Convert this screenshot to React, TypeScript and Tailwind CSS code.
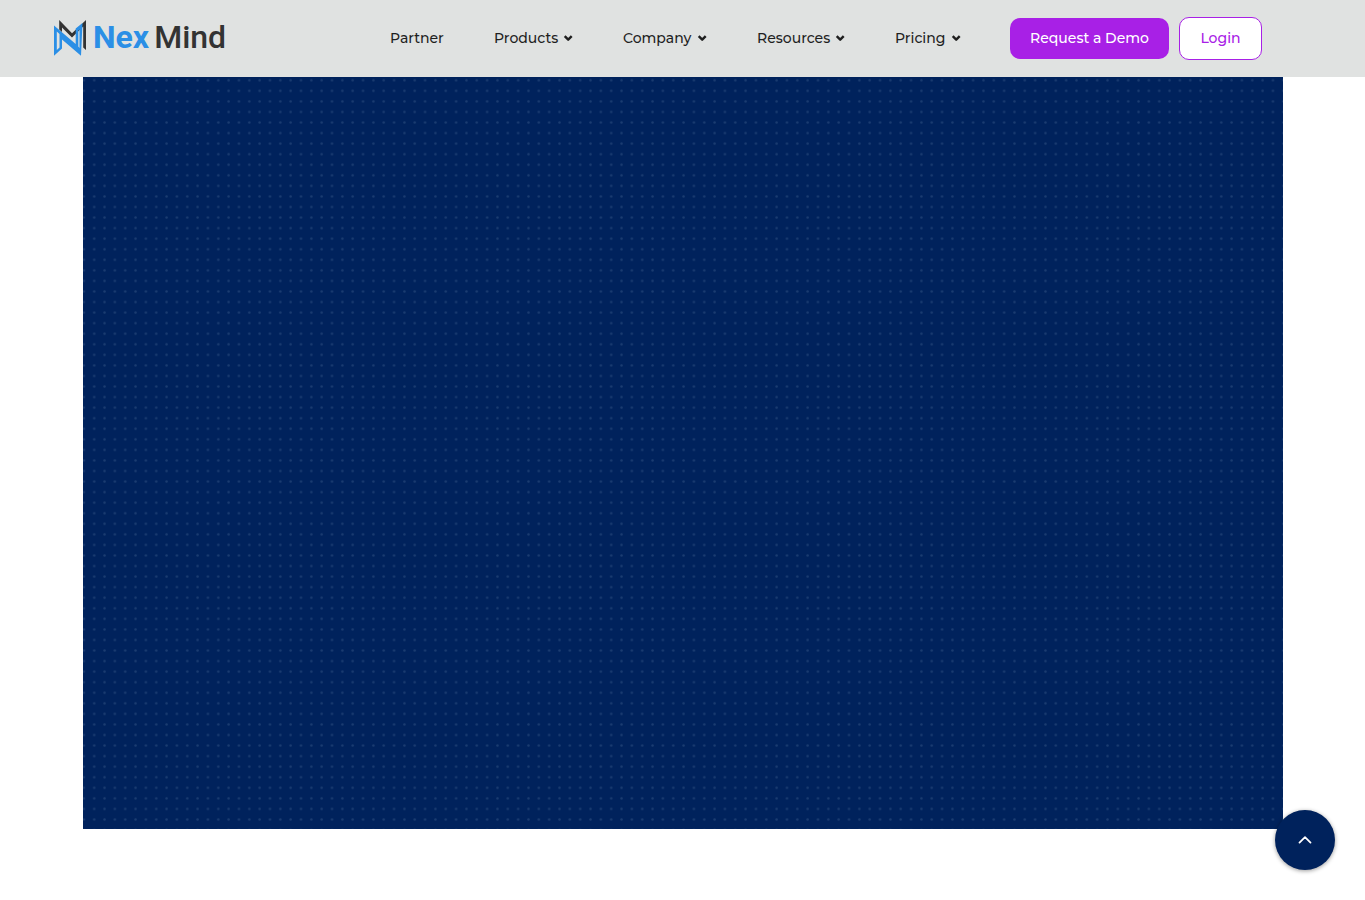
type NavItem = { label: string; width: string; menu: boolean };

const navItems: NavItem[] = [
  { label: 'Partner', width: 'w-[54px]', menu: false },
  { label: 'Products', width: 'w-[79px]', menu: true },
  { label: 'Company', width: 'w-[84px]', menu: true },
  { label: 'Resources', width: 'w-[88px]', menu: true },
  { label: 'Pricing', width: 'w-[66px]', menu: true },
];

function LogoMark() {
  return (
    <svg viewBox="0 0 32 36" className="h-9 w-8" fill="none" aria-hidden="true">
      <path d="M5.200 9.500V0L18 13.200L32 0v30l-2.800-2.500V6.500L18 17.500L8 7.500V12z" fill="#333333" />
      <path
        fillRule="evenodd"
        d="M0 5.500L21.700 24V8.500L28.500 3L27 35.700L8 19.500V28.500L0 35.700z M2.800 11.500V30L5.500 27.500V14z M24.300 10.500V26.500L25.500 28V9.500z"
        fill="#2b8fe6"
      />
    </svg>
  );
}

function ChevronDown() {
  return (
    <svg viewBox="0 0 10 8" className="h-2 w-[10px] shrink-0" fill="none" aria-hidden="true">
      <path
        d="M1.700 2.200L5.200 5.700L8.700 2.200"
        stroke="#1f1f1f"
        strokeWidth="2.400"
        strokeLinejoin="round"
      />
    </svg>
  );
}

function Header() {
  return (
    <header className="flex h-[77px] items-center justify-between bg-[#e0e2e1] pl-[54px] pr-[103px]">
      <a href="#home" aria-label="NexMind" className="flex items-center gap-[7px] pb-0.5">
        <LogoMark />
        <span className="flex gap-[5px] pb-0.5 font-['Roboto',sans-serif] text-[32px] leading-9">
          <span className="font-bold text-[#2b8fe6]">Nex</span>
          <span className="font-medium text-[#333333]">Mind</span>
        </span>
      </a>
      <div className="flex items-center gap-[49px]">
        <nav
          aria-label="Main"
          className="flex items-center gap-[50px] pb-0.5 text-sm font-medium leading-5 text-[#1f1f1f]"
        >
          {navItems.map((item) =>
            item.menu ? (
              <button
                key={item.label}
                type="button"
                aria-haspopup="true"
                className={`flex items-center justify-between whitespace-nowrap ${item.width}`}
              >
                {item.label}
                <ChevronDown />
              </button>
            ) : (
              <a key={item.label} href="#partner" className={`whitespace-nowrap ${item.width}`}>
                {item.label}
              </a>
            ),
          )}
        </nav>
        <div className="flex items-center gap-[10px] text-sm font-medium leading-5">
          <a
            href="#demo"
            className="flex h-[41px] w-[159px] items-center justify-center rounded-[10px] bg-[#a820e6] pb-0.5 text-white"
          >
            Request a Demo
          </a>
          <a
            href="#login"
            className="flex h-[43px] w-[83px] items-center justify-center rounded-[10px] border border-[#a820e6] bg-white pb-0.5 text-[#a820e6]"
          >
            Login
          </a>
        </div>
      </div>
    </header>
  );
}

function DottedPanel() {
  return (
    <section className="mx-auto h-[752px] w-full max-w-[1200px] bg-[#00225c]">
      <svg className="h-full w-full" aria-hidden="true">
        <defs>
          <pattern id="dots" x="6" y="-2" width="10.34" height="10.56" patternUnits="userSpaceOnUse">
            <circle cx="5.2" cy="5.3" r="1.2" fill="#244578" fillOpacity="0.75" />
          </pattern>
        </defs>
        <rect width="100%" height="100%" fill="url(#dots)" />
      </svg>
    </section>
  );
}

export default function App() {
  return (
    <div className="min-h-screen bg-white font-['Montserrat','Inter',sans-serif]">
      <Header />
      <main>
        <DottedPanel />
      </main>
      <button
        type="button"
        aria-label="Back to top"
        className="fixed bottom-[30px] right-[30px] flex size-[60px] items-center justify-center rounded-full bg-[#00225c] shadow-[0_1px_4px_rgba(0,0,0,0.4)]"
      >
        <svg viewBox="0 0 14 8" className="h-2 w-[14px]" fill="none" aria-hidden="true">
          <path
            d="M1.5 6.7L7 1.2l5.5 5.5"
            stroke="white"
            strokeWidth="1.7"
            strokeLinecap="round"
            strokeLinejoin="round"
          />
        </svg>
      </button>
    </div>
  );
}
